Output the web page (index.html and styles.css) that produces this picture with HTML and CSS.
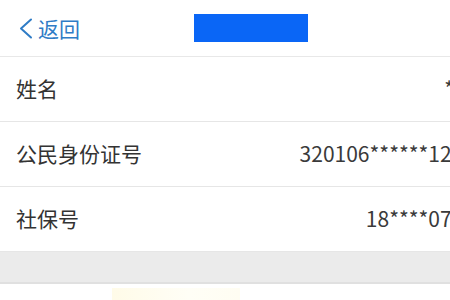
FILE: index.html
```html
<!DOCTYPE html>
<html lang="zh-CN">
<head>
<meta charset="utf-8">
<link rel="stylesheet" href="styles.css">
</head>
<body>
<div class="page">
  <header class="nav">
    <a class="back">
      <svg class="chev" width="15" height="21" viewBox="0 0 15 21"><path d="M13 1.5 L3 10.5 L13 19.5" fill="none" stroke="#2f7cc6" stroke-width="2" stroke-linecap="round" stroke-linejoin="round"/></svg>
      <span class="back-text">返回</span>
    </a>
    <div class="title-block"></div>
  </header>
  <div class="list">
    <div class="row"><span class="label">姓名</span><span class="value">*明</span></div>
    <div class="row"><span class="label">公民身份证号</span><span class="value">320106******1234</span></div>
    <div class="row"><span class="label">社保号</span><span class="value">18****0712</span></div>
  </div>
  <div class="band"></div>
  <div class="footer"><div class="glow"></div></div>
</div>
</body>
</html>
```

FILE: styles.css
```css
html, body {
  margin: 0;
  padding: 0;
  background: #ffffff;
  overflow: hidden;
}
body {
  font-family: "Noto Sans CJK SC", "Liberation Sans", sans-serif;
  color: #333333;
  width: 450px;
  height: 300px;
}
.page {
  width: 450px;
}
.nav {
  height: 56px;
  border-bottom: 1px solid #e8e8e8;
  display: flex;
  align-items: center;
}
.back {
  display: flex;
  align-items: center;
  padding-left: 18px;
  gap: 5px;
  color: #2f7cc6;
  font-size: 21px;
  line-height: 1;
}
.chev {
  display: block;
}
.title-block {
  margin-left: 114px;
  width: 114px;
  height: 28px;
  background: #0a66f6;
}
.list {
  width: 475px;
}
.row {
  height: 64px;
  border-bottom: 1px solid #e6e6e6;
  display: flex;
  align-items: center;
  justify-content: space-between;
  padding-left: 16px;
  font-size: 21px;
}
.row:last-child {
  border-bottom: none;
}
.label {
  margin-top: -3px;
}
.value {
  color: #3a3a3a;
  margin-top: -3px;
}
.band {
  height: 30px;
  background: #ebebeb;
  border-top: 1px solid #e6e6e6;
  border-bottom: 2px solid #e0e0e0;
}
.footer {
  height: 20px;
  padding-top: 4px;
  padding-left: 112px;
}
.glow {
  width: 128px;
  height: 16px;
  background: linear-gradient(90deg, #fffbe8, #fffef6 60%, #fffdf2);
}
```
